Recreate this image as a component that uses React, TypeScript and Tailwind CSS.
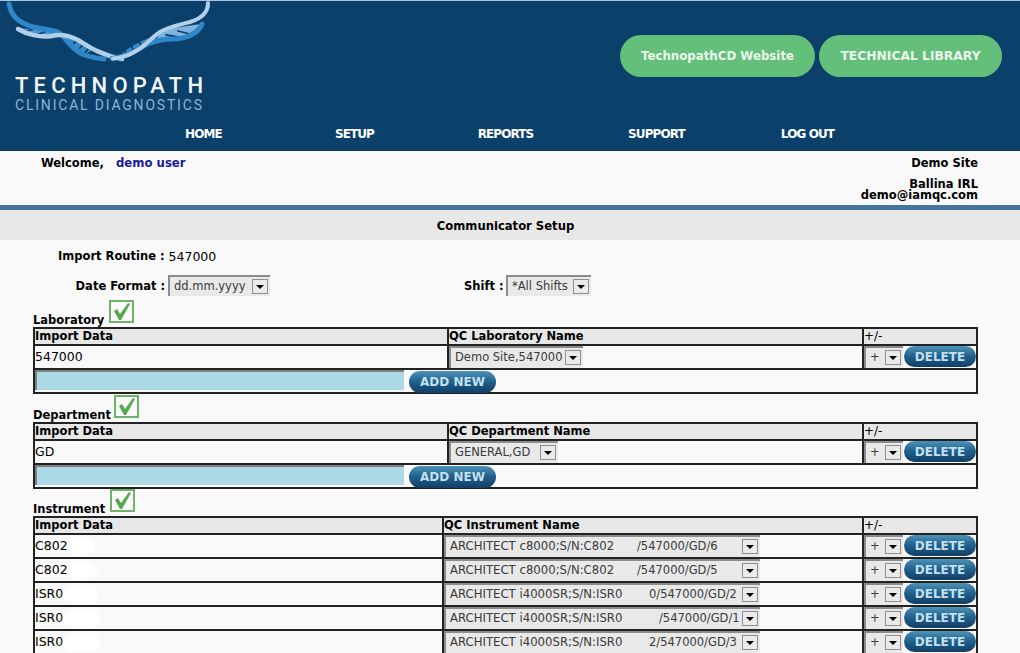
const verdana = "font-['DejaVu_Sans',sans-serif]"

function Logo() {
  return (
    <div className="w-[215px] shrink-0">
      <svg className="block" width="215" height="62" viewBox="0 0 215 62" fill="none" strokeLinecap="round">
        {/* left wing: filled band with rungs */}
        <path d="M18 27C28 28 44 29 57 30C62 34 58 35 50 36C38 37 26 34 18 27Z" fill="#4f97d2" />
        <path d="M66 38C78 36 86 40 94 47C88 53 84 54 82 54C74 50 69 45 66 38Z" fill="#3a88c6" />
        {/* right wing band */}
        <path d="M201 23C190 25 176 26 165 28C160 32 158 36 156 39C170 40 188 38 201 23Z" fill="#7fb3e0" />
        <path d="M122 52C130 46 140 40 152 36C150 42 142 48 135 51C130 53 126 54 122 52Z" fill="#3a88c6" />
        {/* rungs */}
        <g stroke="#0a4069" strokeWidth="1.8">
          <path d="M24 31L34 28M36 34L47 30" />
          <path d="M74 42L80 36M80 47L86 40M85 52L91 44" />
          <path d="M127 53L123 47M134 50L130 43M142 46L138 39" />
          <path d="M166 34L178 36M178 30L190 33" />
        </g>
        {/* strands */}
        <path d="M9 3C11 14 17 21 33 26C44 28 52 29 58 31C66 36 68 45 82 53C90 56 96 57.5 104 58" stroke="#2f86c8" strokeWidth="5" />
        <path d="M18 28C26 33 40 37 52 35C60 33 68 34 78 39C88 45 100 54 122 58" stroke="#b3d0ea" strokeWidth="4.5" />
        <path d="M202 23C198 33 186 38 172 38C160 38 152 40 142 46C130 54 122 56 112 57.5" stroke="#2f86c8" strokeWidth="5" />
        <path d="M208 2C208 12 200 18 190 21C178 24 168 26 160 31C150 38 144 46 136 50C128 55 120 57 113 57.5" stroke="#b3d0ea" strokeWidth="4" />
      </svg>
      <div className="mt-[11px] ml-[15px] font-['Roboto',sans-serif] font-medium text-[22px] leading-[24px] tracking-[5.2px] text-[#f1f6fa] whitespace-nowrap">TECHNOPATH</div>
      <div className="-mt-[1px] ml-[15px] font-['Roboto',sans-serif] text-[14px] leading-[17px] tracking-[1.8px] text-[#8db5d2] whitespace-nowrap">CLINICAL DIAGNOSTICS</div>
    </div>
  )
}

function Header() {
  const links = ["HOME", "SETUP", "REPORTS", "SUPPORT", "LOG OUT"]
  return (
    <div className="bg-[#0a4069] h-[151px] border-t border-[#a9c7df] flex flex-col">
      <div className="flex justify-between h-[112px]">
        <Logo />
        <div className="flex gap-[4px] pt-[34px] pr-[18px]">
          <a className="h-[42px] w-[195px] pt-[1px] rounded-[21px] bg-[#63bf7a] text-[#ebf7ec] text-[11.8px] font-bold flex items-center justify-center">TechnopathCD Website</a>
          <a className="h-[42px] w-[183px] pt-[1px] rounded-[21px] bg-[#63bf7a] text-[#ebf7ec] text-[12.3px] font-bold flex items-center justify-center">TECHNICAL LIBRARY</a>
        </div>
      </div>
      <div className="flex pl-[128px] pt-[14px]">
        {links.map((l) => (
          <a key={l} className="w-[151px] text-center text-white text-[12px] leading-[14px] font-bold tracking-[-0.9px]">{l}</a>
        ))}
      </div>
    </div>
  )
}

function Arrow() {
  return (
    <span className="w-[16px] h-[15px] bg-[#eaeaea] border border-[#8f8f8f] flex items-center justify-center shrink-0">
      <span className="w-0 h-0 border-x-[4px] border-x-transparent border-t-[4px] border-t-black" />
    </span>
  )
}

function Select({ value, width, pad = "pb-[1px]" }: { value: string; width: string; pad?: string }) {
  return (
    <div className={`flex items-center justify-between h-full ${width} ${pad} bg-[#e9e9e9] border-t-2 border-l-2 border-t-[#8c8c8c] border-l-[#8c8c8c] pl-[4px] pr-[2px] text-[11.5px] text-[#3a3a3a] whitespace-nowrap`}>
      <span>{value}</span>
      <Arrow />
    </div>
  )
}

function Check({ offset }: { offset: string }) {
  return (
    <svg className={`absolute bottom-[4px] ${offset}`} width="25" height="23" viewBox="0 0 25 23">
      <rect x="1" y="1" width="23" height="21" fill="#fbfbfb" stroke="#6fb36a" strokeWidth="2" />
      <path d="M5 11L8 9L11 14L19 3L21 4L12 20L10 20Z" fill="#55a84f" />
    </svg>
  )
}

function BlueBtn({ label, size }: { label: string; size: string }) {
  return (
    <span className={`${size} rounded-[11px] bg-gradient-to-b from-[#4d93b8] via-[#1f5f8b] to-[#123f66] text-[#c4e0ee] text-[12px] font-bold flex items-center justify-center`}>{label}</span>
  )
}

function HeadRow({ col1, name }: { col1: string; name: string }) {
  return (
    <div className="flex h-[17px] bg-[#e7e7e7] border-b-2 border-[#222] text-[11.5px] leading-[15px]">
      <div className={`${col1} font-bold`}>Import Data</div>
      <div className="flex-1 border-l-2 border-[#222] font-bold">{name}</div>
      <div className="w-[114px] border-l-2 border-[#222] text-[12px]">+/-</div>
    </div>
  )
}

function PlusMinus() {
  return (
    <div className="w-[114px] border-l-2 border-[#222] flex items-start">
      <div className="h-[22px] w-[39px]"><Select value="+" width="w-full" /></div>
      <div className="ml-[1px]"><BlueBtn label="DELETE" size="w-[72px] h-[21px]" /></div>
    </div>
  )
}

function SimpleTable({ name, data, value, selectWidth }: { name: string; data: string; value: string; selectWidth: string }) {
  return (
    <div className="border-2 border-[#222] bg-[#f9f9f9] h-[67px] text-black">
      <HeadRow col1="w-[412px]" name={name} />
      <div className="flex h-[24px] border-b-2 border-[#222]">
        <div className="w-[412px] text-[12.5px] leading-[22px]">{data}</div>
        <div className="flex-1 border-l-2 border-[#222] h-[22px]"><Select value={value} width={selectWidth} /></div>
        <PlusMinus />
      </div>
      <div className="flex gap-[5px]">
        <div className="w-[369px] h-[20px] bg-[#add8e6] border-t-2 border-l-2 border-t-[#808080] border-l-[#808080]" />
        <div className="pt-[1px]"><BlueBtn label="ADD NEW" size="w-[87px] h-[22px]" /></div>
      </div>
    </div>
  )
}

const instruments = [
  { id: "C802", blob: "w-[26px]", name: "ARCHITECT c8000;S/N:C802", rest: "/547000/GD/6", gap: "w-[187px]" },
  { id: "C802", blob: "w-[29px]", name: "ARCHITECT c8000;S/N:C802", rest: "/547000/GD/5", gap: "w-[187px]" },
  { id: "ISR0", blob: "w-[36px]", name: "ARCHITECT i4000SR;S/N:ISR0", rest: "0/547000/GD/2", gap: "w-[199px]" },
  { id: "ISR0", blob: "w-[37px]", name: "ARCHITECT i4000SR;S/N:ISR0", rest: "/547000/GD/1", gap: "w-[209px]" },
  { id: "ISR0", blob: "w-[37px]", name: "ARCHITECT i4000SR;S/N:ISR0", rest: "2/547000/GD/3", gap: "w-[199px]" },
]

function InstrumentTable() {
  return (
    <div className="border-2 border-b-0 border-[#222] bg-[#f9f9f9] text-black">
      <HeadRow col1="w-[407px]" name="QC Instrument Name" />
      {instruments.map((r, i) => (
        <div key={i} className="flex h-[24px] border-b-2 border-[#222]">
          <div className="w-[407px] text-[12.5px] leading-[22px] flex">
            {r.id}
            <span className={`${r.blob} h-[17px] mt-[3px] rounded-full bg-white blur-[1px]`} />
          </div>
          <div className="flex-1 border-l-2 border-[#222] h-[22px]">
            <div className="flex items-center justify-between w-[316px] h-full bg-[#e9e9e9] border-t-2 border-l-2 border-t-[#8c8c8c] border-l-[#8c8c8c] pl-[4px] pr-[2px] pb-[1px] text-[11.5px] text-[#3a3a3a] whitespace-nowrap">
              <span className="flex">
                <span className={`${r.gap} text-[11.7px]`}>{r.name}</span>
                <span>{r.rest}</span>
              </span>
              <Arrow />
            </div>
          </div>
          <PlusMinus />
        </div>
      ))}
    </div>
  )
}

export default function App() {
  return (
    <div className={`${verdana} w-[1020px] h-[653px] overflow-hidden bg-[#f9f9f9] text-black`}>
      <Header />

      <div className="flex justify-between h-[54px] pl-[41px] pr-[42px] pt-[5px] text-[11.5px] font-bold leading-[14px]">
        <div className="flex">
          <span className="w-[75px]">Welcome,</span>
          <span className="text-[#1a1a9c] text-[11.7px]">demo user</span>
        </div>
        <div className="text-right">
          <div>Demo Site</div>
          <div className="mt-[9px] leading-[11px]">Ballina IRL</div>
          <div className="leading-[11px]">demo@iamqc.com</div>
        </div>
      </div>

      <div className="h-[5px] bg-[#44779b]" />
      <div className="h-[30px] pr-[9px] bg-[#e8e8e8] text-center text-[11.6px] font-bold leading-[32px]">Communicator Setup</div>

      <div className="px-[33px] w-[1011px]">
        <div className="flex items-center h-[16px] mt-[9px] pl-[25px] text-[11.5px] font-bold">
          Import Routine :<span className="ml-[4px] font-normal text-[12.5px]">547000</span>
        </div>

        <div className="flex h-[21px] mt-[10px] text-[11.5px] font-bold items-center">
          <div className="w-[135px] pt-[3px] text-right pr-[3px] whitespace-nowrap">Date Format :</div>
          <div className="h-[21px] font-normal"><Select value="dd.mm.yyyy" width="w-[102px]" pad="pb-0" /></div>
          <div className="ml-[194px] pt-[3px] w-[42px] whitespace-nowrap">Shift :</div>
          <div className="h-[21px] font-normal"><Select value="*All Shifts" width="w-[85px]" pad="pb-0" /></div>
        </div>

        <div className="relative h-[31px] text-[11.5px] font-bold">
          <span className="absolute left-0 -bottom-[2px]">Laboratory</span>
          <Check offset="left-[76px]" />
        </div>
        <SimpleTable name="QC Laboratory Name" data="547000" value="Demo Site,547000" selectWidth="w-[134px]" />

        <div className="relative h-[28px] text-[11.5px] font-bold">
          <span className="absolute left-0 -bottom-[2px]">Department</span>
          <Check offset="left-[81px]" />
        </div>
        <SimpleTable name="QC Department Name" data="GD" value="GENERAL,GD" selectWidth="w-[109px]" />

        <div className="relative h-[27px] text-[11.5px] font-bold">
          <span className="absolute left-0 -bottom-[2px]">Instrument</span>
          <Check offset="left-[77px]" />
        </div>
        <InstrumentTable />
      </div>
    </div>
  )
}
